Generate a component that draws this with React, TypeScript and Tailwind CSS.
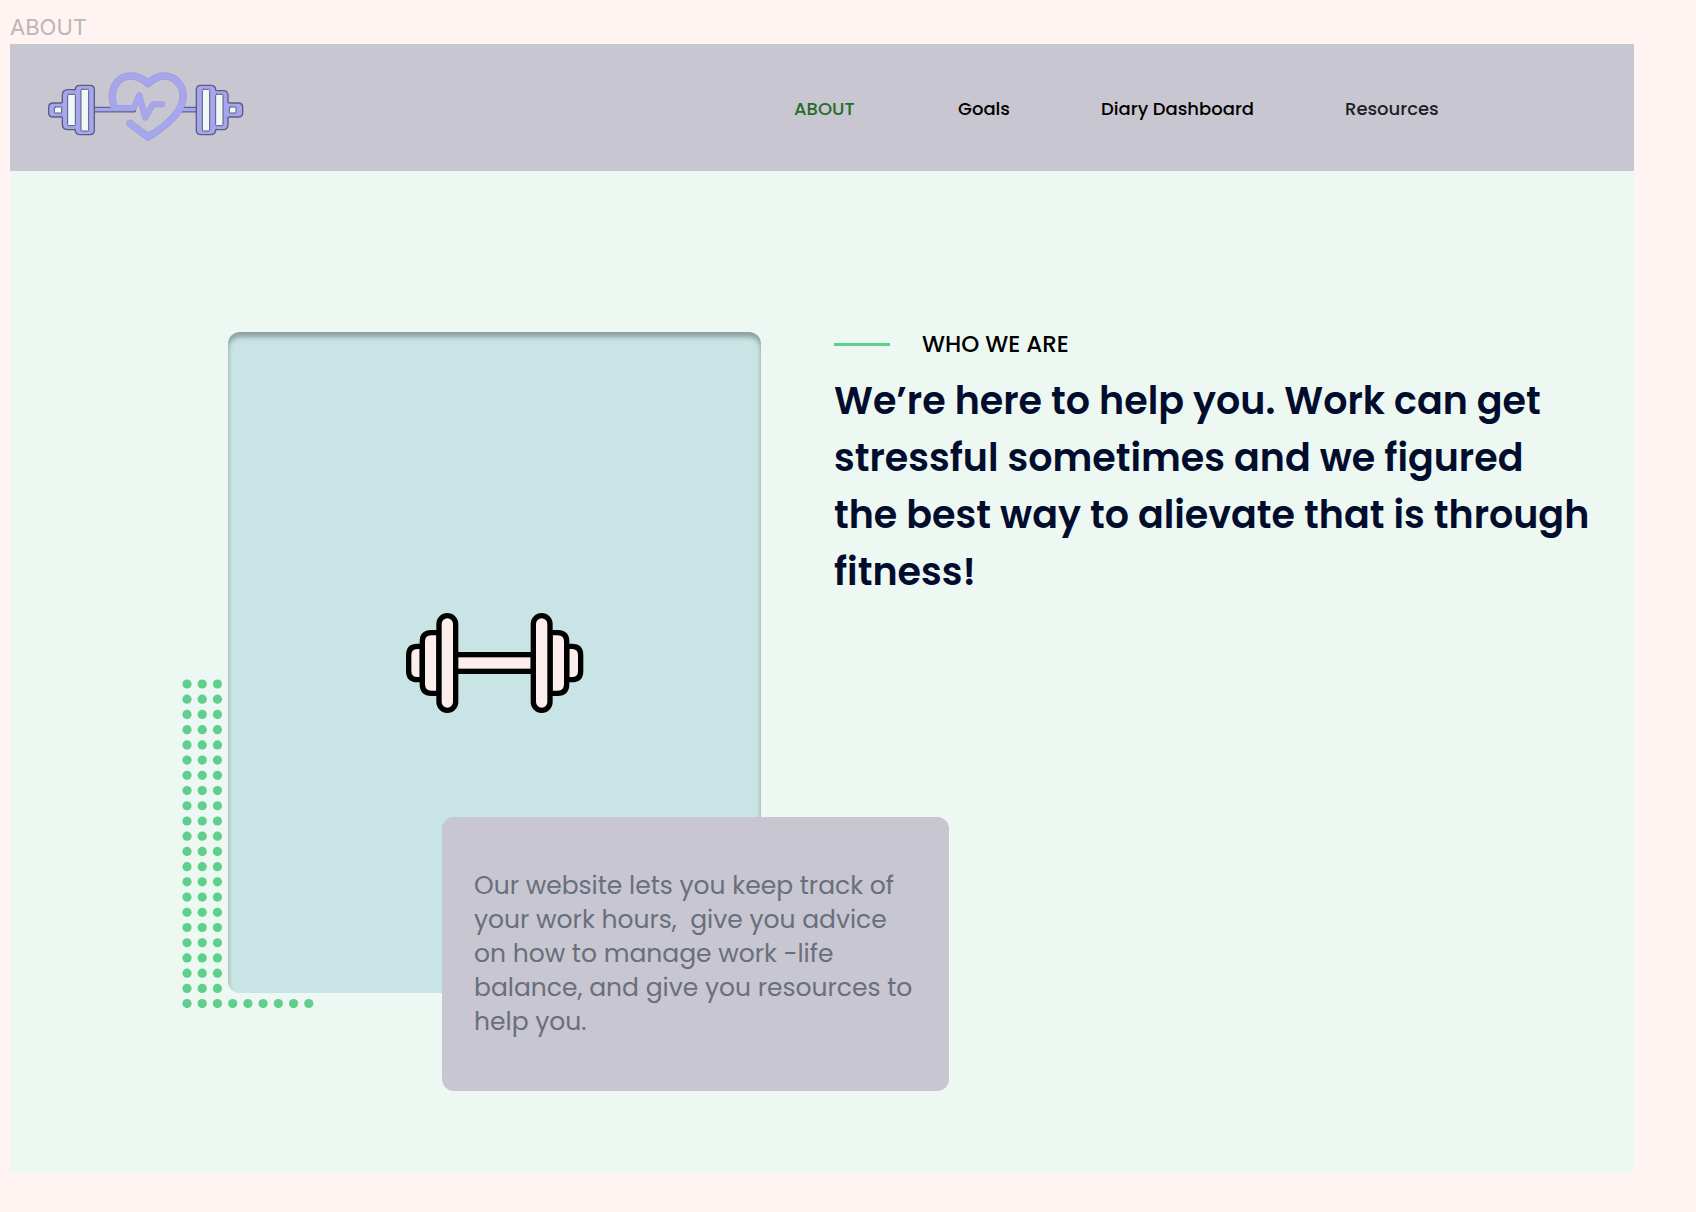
import React from "react";

const navItems = [
  { label: "ABOUT", color: "text-[#256d2b]" },
  { label: "Goals", color: "text-black" },
  { label: "Diary Dashboard", color: "text-black" },
  { label: "Resources", color: "text-[#1d1d1f]" },
];

function Logo() {
  return (
    <svg
      viewBox="0 8 630 270"
      className="h-[90px] w-[210px]"
      fill="none"
      strokeLinecap="round"
      strokeLinejoin="round"
      aria-hidden="true"
    >
      {/* Bar */}
      <path d="M164 148H280M424 148H468" stroke="#62628c" strokeWidth="17" />
      <path d="M166 148H280M424 148H466" stroke="#a5a6ee" strokeWidth="10" />

      {/* Weights */}
      {[
        "M68 128H40Q26 128 26 141V157Q26 170 40 170H68",
        "M106 88H84Q67 88 67 104V192Q67 208 84 208H106Z",
        "M120 75H150Q163 75 163 88V210Q163 223 150 223H120Q106 223 106 210V88Q106 75 120 75Z",
        "M564 128H594Q608 128 608 141V157Q608 170 594 170H564",
        "M526 91H550Q564 91 564 106V192Q564 208 550 208H526Z",
        "M482 75H512Q527 75 527 88V210Q527 223 512 223H482Q469 223 469 210V88Q469 75 482 75Z",
      ].map((d) => (
        <path key={d} d={d} fill="#a5a6ee" stroke="#5c5c82" strokeWidth="4" />
      ))}
      <path d="M68 131V167M106 92V204M564 131V167M527 94V204" stroke="#a5a6ee" strokeWidth="6" />
      <g fill="#f0f8fb" stroke="#5c5c70" strokeWidth="3">
        <rect x="43" y="140" width="22" height="18" rx="3" />
        <rect x="83" y="102" width="23" height="94" rx="3" />
        <rect x="123" y="87" width="23" height="125" rx="3" />
        <rect x="487" y="87" width="22" height="125" rx="3" />
        <rect x="527" y="102" width="22" height="94" rx="3" />
        <rect x="568" y="140" width="20" height="18" rx="3" />
      </g>

      {/* Heart with pulse line */}
      <g stroke="#9c9dd6" strokeWidth="22">
        <path d="M223 141C204 91 230 48 271 47C295 46 312 58 324 70C336 58 353 46 375 47C412 49 435 83 428 120C420 164 370 202 324 230L270 189" />
        <path d="M223 143H281L298 105L316 172L338 132H366" strokeWidth="18" />
      </g>
      <g stroke="#a5a6ee" strokeWidth="18">
        <path d="M223 141C204 91 230 48 271 47C295 46 312 58 324 70C336 58 353 46 375 47C412 49 435 83 428 120C420 164 370 202 324 230L270 189" />
        <path d="M223 143H281L298 105L316 172L338 132H366" strokeWidth="15" />
      </g>
    </svg>
  );
}

function Dumbbell() {
  return (
    <svg
      viewBox="0 0 630 375"
      className="h-[125px] w-[210px]"
      fill="#fdeeee"
      stroke="#000"
      strokeWidth="16"
      aria-hidden="true"
    >
      <rect x="196" y="161" width="234" height="50" />
      <path d="M97 136H82Q56 136 56 162V210Q56 236 82 236H97Z" />
      <path d="M147 95H124Q97 95 97 122V250Q97 277 124 277H147Z" />
      <rect x="147" y="44" width="50" height="284" rx="25" />
      <path d="M530 136H546Q572 136 572 162V210Q572 236 546 236H530Z" />
      <path d="M480 95H503Q530 95 530 122V250Q530 277 503 277H480Z" />
      <rect x="430" y="44" width="50" height="284" rx="25" />
    </svg>
  );
}

/* 22 rows of 3 dots, the last row runs on to 9 */
function DotPattern() {
  const dots = [];
  for (let row = 0; row < 22; row++) {
    const count = row === 21 ? 9 : 3;
    for (let col = 0; col < count; col++) {
      dots.push(
        <circle key={`${row}-${col}`} cx={5 + col * 15.22} cy={5 + row * 15.22} r="4.6" />
      );
    }
  }
  return (
    <svg
      viewBox="0 0 132 330"
      className="absolute -bottom-4 -left-[46px] h-[330px] w-[132px]"
      fill="#5fcf8c"
      aria-hidden="true"
    >
      {dots}
    </svg>
  );
}

export default function App() {
  return (
    <div className="min-h-screen bg-[#fff4f2] pt-[10px] pr-[62px] pb-10 pl-[10px] font-['Poppins','Inter',sans-serif]">
      <p className="h-[34px] font-['Inter',sans-serif] text-[22px] leading-[34px] text-[#bcb6b5]">
        ABOUT
      </p>

      <div className="bg-[#edf8f3]">
        {/* Header */}
        <header className="flex h-[127px] items-center justify-between bg-[#c8c6d0] pl-[30px]">
          <a href="#" aria-label="Home">
            <Logo />
          </a>
          <nav>
            <ul className="grid grid-cols-[164px_143px_244px_289px] pt-0.5 text-[18px] leading-6 font-medium">
              {navItems.map((item) => (
                <li key={item.label}>
                  <a href="#" className={item.color}>
                    {item.label}
                  </a>
                </li>
              ))}
            </ul>
          </nav>
        </header>

        <main className="flex items-start pt-[161px] pr-7 pb-[180px] pl-[218px]">
          {/* Picture card */}
          <div className="relative w-[533px] shrink-0">
            <DotPattern />
            <div className="relative flex h-[661px] items-center justify-center rounded-xl bg-[#c9e4e4] pt-0.5 shadow-[inset_0_5px_5px_rgba(0,0,0,0.3)]">
              <Dumbbell />
            </div>
            <div className="absolute top-[485px] left-[214px] w-[507px] rounded-xl bg-[#c8c6d0] px-8 py-[52px]">
              <p className="text-[25px] leading-[34px] whitespace-nowrap text-[#696f7c]">
                Our website lets you keep track of
                <br />
                your work hours,&nbsp; give you advice
                <br />
                on how to manage work -life
                <br />
                balance, and give you resources to
                <br />
                help you.
              </p>
            </div>
          </div>

          {/* Who we are */}
          <section className="ml-[73px] flex-1">
            <div className="flex h-6 items-center gap-8">
              <span className="h-[3px] w-14 bg-[#5fcf8c]" />
              <h2 className="text-[23px] leading-6 font-medium text-black">WHO WE ARE</h2>
            </div>
            <h1 className="mt-4 text-[38px] leading-[57px] font-semibold whitespace-nowrap text-[#020c2c]">
              We’re here to help you. Work can get
              <br />
              stressful sometimes and we figured
              <br />
              the best way to alievate that is through
              <br />
              fitness!
            </h1>
          </section>
        </main>
      </div>
    </div>
  );
}
